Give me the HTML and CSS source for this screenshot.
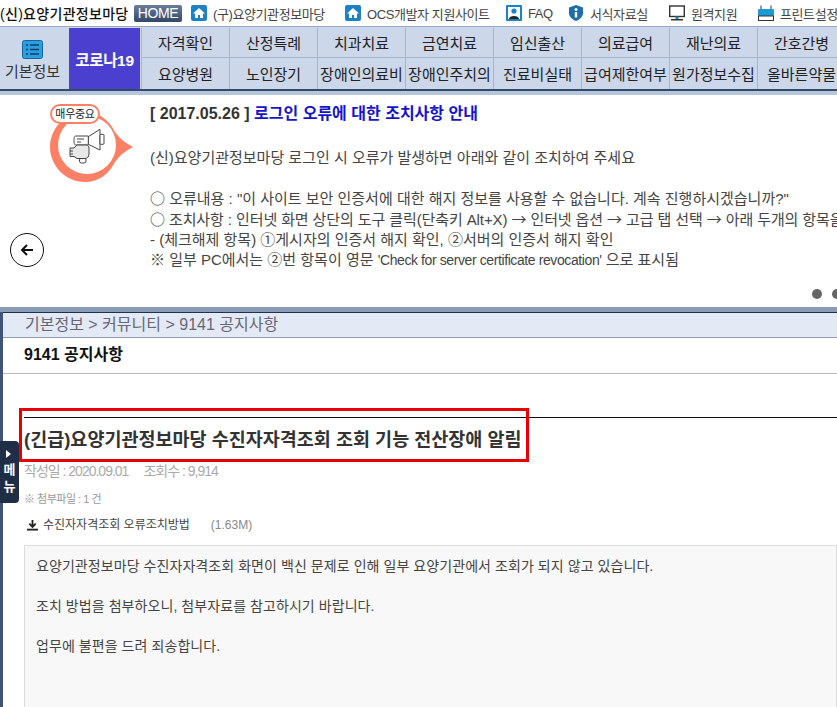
FILE: index.html
```html
<!DOCTYPE html>
<html lang="ko">
<head>
  <meta charset="UTF-8">
  <title>9141 공지사항</title>
  <link rel="stylesheet" href="styles.css">
</head>
<body>
  <!-- Top links -->
  <div class="topbar">
    <strong class="brand">(신)요양기관정보마당</strong>
    <span class="home-btn">HOME</span>
    <a class="toplink link-a"><svg class="ico" viewBox="0 0 16 16"><rect x="0" y="0" width="16" height="16" rx="2" fill="#1c82c4"/><path d="M8 3 2 8.500h2V13h3v-3h2v3h3V8.500h2z" fill="#fff"/></svg>(구)요양기관정보마당</a>
    <a class="toplink link-b"><svg class="ico" viewBox="0 0 16 16"><rect x="0" y="0" width="16" height="16" rx="2" fill="#1c82c4"/><path d="M8 3 2 8.500h2V13h3v-3h2v3h3V8.500h2z" fill="#fff"/></svg>OCS개발자 지원사이트</a>
    <a class="toplink link-c"><svg class="ico" viewBox="0 0 16 16"><rect x="0" y="0" width="16" height="16" rx="1" fill="#1c82c4"/><rect x="2" y="2" width="12" height="12" fill="#fff"/><circle cx="8" cy="6" r="2.600" fill="#1c82c4"/><path d="M3 14c0-4 10-4 10 0z" fill="#222"/></svg>FAQ</a>
    <a class="toplink link-d"><svg class="ico" viewBox="0 0 16 16"><path d="M8 0 15 2.500V8c0 4-3.500 6.500-7 8-3.500-1.500-7-4-7-8V2.500z" fill="#1c6fa8"/><circle cx="8" cy="4.500" r="1.500" fill="#fff"/><rect x="6.800" y="7" width="2.400" height="5.500" fill="#fff"/></svg>서식자료실</a>
    <a class="toplink link-e"><svg class="ico" viewBox="0 0 16 16"><rect x="0.700" y="1" width="14.600" height="10.500" fill="#fff" stroke="#333" stroke-width="1.400"/><rect x="6.500" y="11.500" width="3" height="2.500" fill="#1c82c4"/><rect x="2" y="14" width="12" height="1.500" fill="#333"/></svg>원격지원</a>
    <a class="toplink link-f"><svg class="ico" viewBox="0 0 16 16"><path d="M3 4V0.500M13 4V0.500" stroke="#333"/><rect x="0" y="4" width="16" height="7" rx="1" fill="#1c9ad6"/><rect x="0.500" y="11" width="15" height="4.500" fill="#fff" stroke="#333"/></svg>프린트설정</a>
  </div>

  <!-- Main menu -->
  <div class="mainnav">
    <div class="nav-base">
      <svg class="nav-base-ico" viewBox="0 0 21 19"><rect x="0.500" y="0.500" width="20" height="18" rx="2" fill="#2a9fe0" stroke="#14669c"/><path d="M4 5h2M8 5h9M4 9.500h2M8 9.500h9M4 14h2M8 14h9" stroke="#0c3f66" stroke-width="1.500"/></svg>
      <span>기본정보</span>
    </div>
    <div class="nav-covid">코로나19</div>
    <div class="nav-grid">
      <span>자격확인</span><span>산정특례</span><span>치과치료</span><span>금연치료</span><span>임신출산</span><span>의료급여</span><span>재난의료</span><span>간호간병</span>
      <span>요양병원</span><span>노인장기</span><span>장애인의료비</span><span>장애인주치의</span><span>진료비실태</span><span>급여제한여부</span><span>원가정보수집</span><span>올바른약물</span>
    </div>
  </div>

  <!-- Notice carousel -->
  <div class="notice">
    <div class="notice-badge">
      <span class="badge-label">매우중요</span>
      <svg class="badge-ring" viewBox="0 0 85 76">
        <path d="M36 4C50 4 60 12 66 24 70 30 76 35 84 39 76 43 70 48 66 54 60 66 50 74 36 74 17 74 1 58 1 39 1 20 17 4 36 4z" fill="#fb8066"/>
        <circle cx="38" cy="37" r="29" fill="#fff"/>
        <g fill="#fff" stroke="#444" stroke-width="1">
          <path d="M39.300 28.700 51 21.300V42L39.300 36.300z"/>
          <rect x="51" y="26.300" width="4" height="10" rx="1"/>
          <path d="M27 28h12.300v9H27c-1.500 0-2-1-2-4.500s.5-4.500 2-4.500z"/>
          <path d="M28 31h7M28 34h4"/>
          <rect x="30.500" y="50" width="6.500" height="5" rx="2"/>
          <path d="M21 40h4l3-3h9c2 0 3 1.500 3 3v6c0 3-2 4.500-4 4.500h-8l-3-2h-4z" fill="#e8e8e8"/>
          <path d="M21 43h3M21 46h3"/>
        </g>
      </svg>
    </div>
    <div class="notice-body">
      <h3 class="notice-title"><span class="notice-date">[ 2017.05.26 ]</span> 로그인 오류에 대한 조치사항 안내</h3>
      <p class="notice-intro">(신)요양기관정보마당 로그인 시 오류가 발생하면 아래와 같이 조치하여 주세요</p>
      <p class="notice-line"><span class="sym">○</span> 오류내용 : "이 사이트 보안 인증서에 대한 해지 정보를 사용할 수 없습니다. 계속 진행하시겠습니까?"</p>
      <p class="notice-line line-two"><span class="sym">○</span> 조치사항 : 인터넷 화면 상단의 도구 클릭(단축키 Alt+X) <span class="sym">→</span> 인터넷 옵션 <span class="sym">→</span> 고급 탭 선택 <span class="sym">→</span> 아래 두개의 항목을 체크해제</p>
      <p class="notice-line">- (체크해제 항목) ①게시자의 인증서 해지 확인, ②서버의 인증서 해지 확인</p>
      <p class="notice-line">※ 일부 PC에서는 ②번 항목이 영문 <span class="latin">'Check for server certificate revocation'</span> 으로 표시됨</p>
    </div>
    <button class="notice-prev"><svg viewBox="0 0 16 16"><path d="M14 8H3M8 3 3 8l5 5" fill="none" stroke="#111" stroke-width="2"/></svg></button>
    <div class="notice-dots"><i></i><i></i></div>
  </div>

  <!-- Page body -->
  <div class="pagewrap">
    <div class="crumbs">기본정보 &gt; 커뮤니티 &gt; 9141 공지사항</div>
    <h2 class="page-title">9141 공지사항</h2>
    <div class="article">
      <h1 class="article-title">(긴급)요양기관정보마당 수진자자격조회 조회 기능 전산장애 알림</h1>
      <div class="article-meta"><span>작성일 : 2020.09.01</span><span>조회수 : 9,914</span></div>
      <div class="article-count">※ 첨부파일 : 1 건</div>
      <div class="article-file">
        <svg class="file-ico" viewBox="0 0 12 12"><path d="M6 0v7M2.500 4 6 7.500 9.500 4" fill="none" stroke="#222" stroke-width="2"/><rect x="0" y="9.500" width="12" height="2" fill="#222"/></svg>
        <span>수진자자격조회 오류조치방법</span><span class="file-size">(1.63M)</span>
      </div>
      <div class="article-text">
        <p>요양기관정보마당 수진자자격조회 화면이 백신 문제로 인해 일부 요양기관에서 조회가 되지 않고 있습니다.</p>
        <p>조치 방법을 첨부하오니, 첨부자료를 참고하시기 바랍니다.</p>
        <p>업무에 불편을 드려 죄송합니다.</p>
      </div>
    </div>
    <div class="menu-tab"><span class="menu-arrow"></span>메<br>뉴</div>
    <div class="red-box"></div>
  </div>
</body>
</html>
```
FILE: styles.css
```css
html, body {
  margin: 0;
  padding: 0;
  height: 707px;
  overflow: hidden;
  background: #ffffff;
}
body {
  font-family: "Liberation Sans", "Noto Sans CJK KR", sans-serif;
  color: #333;
  width: 837px;
}
p, h1, h2, h3 {
  margin: 0;
}

/* top links */
.topbar {
  height: 26px;
  display: flex;
  align-items: center;
  white-space: nowrap;
  font-size: 13px;
  color: #444;
  letter-spacing: -0.4px;
}
.brand {
  font-size: 14px;
  font-weight: 500;
  color: #111;
  width: 134px;
  flex: none;
  letter-spacing: 0.3px;
}
.home-btn {
  width: 48px;
  height: 17px;
  line-height: 17px;
  flex: none;
  text-align: center;
  background: linear-gradient(#6a7d99, #32476a);
  border-radius: 2px;
  color: #fff;
  font-size: 14px;
  font-family: "Liberation Sans", sans-serif;
  font-weight: normal;
}
.toplink {
  display: flex;
  align-items: center;
  gap: 6px;
  flex: none;
}
.ico {
  width: 16px;
  height: 16px;
  flex: none;
}
.link-a { margin-left: 9px; width: 154px; }
.link-b { width: 161px; }
.link-c { width: 62px; }
.link-d { width: 101px; }
.link-e { width: 89px; }
.link-f { width: 90px; }

/* main menu */
.mainnav {
  height: 61px;
  display: flex;
  background: #ccd7ea;
  border-top: 1px solid #99a8c4;
  border-bottom: 2px solid #33496e;
  padding-top: 1px;
  overflow: hidden;
}
.nav-base {
  width: 68px;
  flex: none;
  display: flex;
  flex-direction: column;
  align-items: center;
  gap: 4px;
  padding: 12px 3px 0 0;
  box-sizing: border-box;
  font-size: 15px;
  line-height: 18px;
  color: #333;
}
.nav-base-ico {
  width: 21px;
  height: 19px;
  flex: none;
}
.nav-covid {
  width: 71px;
  flex: none;
  margin-left: 1px;
  display: flex;
  align-items: center;
  justify-content: center;
  background: #4b3fcf;
  color: #fff;
  font-size: 15.5px;
  font-weight: 700;
  letter-spacing: -0.3px;
}
.nav-grid {
  flex: none;
  margin-left: 1px;
  display: grid;
  grid-template-columns: repeat(8, 88px);
  grid-template-rows: 30px 31px;
  border-left: 1px solid #a6b4cf;
  font-size: 15px;
  color: #222;
}
.nav-grid span {
  display: flex;
  align-items: center;
  justify-content: center;
  white-space: nowrap;
  border-right: 1px solid #a6b4cf;
}
.nav-grid span:nth-child(-n+8) {
  border-bottom: 1px solid #a6b4cf;
}

/* notice carousel */
.notice {
  position: relative;
  height: 212px;
  border-top: 4px solid #b8c5da;
  display: flex;
  overflow: hidden;
}
.notice-badge {
  position: relative;
  width: 150px;
  flex: none;
}
.badge-label {
  position: absolute;
  left: 50px;
  top: 9px;
  width: 50px;
  height: 20px;
  line-height: 17px;
  box-sizing: border-box;
  border: 2px solid #fb8066;
  border-radius: 10px;
  background: #fff;
  color: #222;
  font-size: 11px;
  letter-spacing: -0.3px;
  text-align: center;
  z-index: 1;
}
.badge-ring {
  position: absolute;
  left: 49px;
  top: 13px;
  width: 85px;
  height: 76px;
}
.notice-body {
  flex: none;
  width: 760px;
  padding-top: 6px;
  font-size: 15px;
  color: #444;
  white-space: nowrap;
}
.notice-title {
  font-size: 16px;
  font-weight: 700;
  line-height: 26px;
  color: #1414c8;
}
.notice-date {
  color: #333;
}
.notice-intro {
  margin-top: 21px;
  line-height: 20px;
  margin-bottom: 20px;
}
.notice-line {
  line-height: 20px;
}
.line-two {
  letter-spacing: -0.1px;
}
.sym {
  font-family: "Noto Sans CJK KR", sans-serif;
}
.latin {
  font-size: 14px;
  letter-spacing: -0.4px;
}
.notice-prev {
  position: absolute;
  left: 10px;
  top: 138px;
  width: 34px;
  height: 34px;
  padding: 8px;
  border: 1px solid #111;
  border-radius: 50%;
  background: #fff;
}
.notice-prev svg {
  display: block;
}
.notice-dots {
  position: absolute;
  left: 812px;
  top: 194px;
  display: flex;
  gap: 10px;
}
.notice-dots i {
  width: 10px;
  height: 10px;
  border-radius: 50%;
  background: #666;
}

/* page body */
.pagewrap {
  position: relative;
  height: 395px;
  border-top: 5px solid #8a9bb5;
}
.pagewrap::before {
  content: "";
  position: absolute;
  left: 0;
  top: 0;
  bottom: 0;
  width: 3px;
  background: #3f5478;
}
.crumbs {
  height: 26px;
  line-height: 24px;
  border-top: 1px solid #1f3050;
  border-bottom: 1px solid #8f9db5;
  box-sizing: border-box;
  padding-left: 25px;
  background: #e4eaf5;
  font-size: 16px;
  color: #667;
}
.page-title {
  height: 36px;
  line-height: 33px;
  box-sizing: border-box;
  padding-left: 24px;
  border-bottom: 1px solid #bbb;
  font-size: 16px;
  font-weight: 700;
  color: #111;
}
.article {
  padding-left: 24px;
  padding-top: 43px;
}
.article-title {
  border-top: 1px solid #111;
  height: 45px;
  box-sizing: border-box;
  line-height: 44px;
  font-size: 18.5px;
  font-weight: 700;
  color: #333;
  white-space: nowrap;
}
.article-meta {
  display: flex;
  gap: 15px;
  font-size: 14px;
  line-height: 18px;
  color: #aaa;
  letter-spacing: -1px;
}
.article-count {
  margin-top: 12px;
  font-size: 11px;
  line-height: 14px;
  color: #999;
  letter-spacing: -0.5px;
}
.article-file {
  margin-top: 10px;
  padding-left: 3px;
  display: flex;
  align-items: center;
  gap: 5px;
  font-size: 12px;
  line-height: 18px;
  color: #444;
}
.file-ico {
  width: 11px;
  height: 11px;
  flex: none;
}
.file-size {
  margin-left: 16px;
  color: #888;
}
.article-text {
  margin-top: 11px;
  height: 200px;
  padding: 10px 11px;
  border: 1px solid #ddd;
  background: #f8f8f8;
  font-size: 14px;
  line-height: 20px;
  letter-spacing: 0.07px;
  color: #444;
  white-space: nowrap;
}
.article-text p {
  margin-bottom: 20px;
}
.menu-tab {
  position: absolute;
  left: 0;
  top: 129px;
  width: 19px;
  height: 62px;
  padding-top: 20px;
  box-sizing: border-box;
  background: #1f2e46;
  border-radius: 0 4px 4px 0;
  color: #fff;
  font-size: 13px;
  line-height: 17px;
  font-weight: 700;
  text-align: center;
}
.menu-arrow {
  position: absolute;
  left: 6px;
  top: 9px;
  border-left: 5px solid #fff;
  border-top: 4px solid transparent;
  border-bottom: 4px solid transparent;
}
.red-box {
  position: absolute;
  left: 19px;
  top: 96px;
  width: 510px;
  height: 54px;
  box-sizing: border-box;
  border: 3px solid #e60000;
}
```
